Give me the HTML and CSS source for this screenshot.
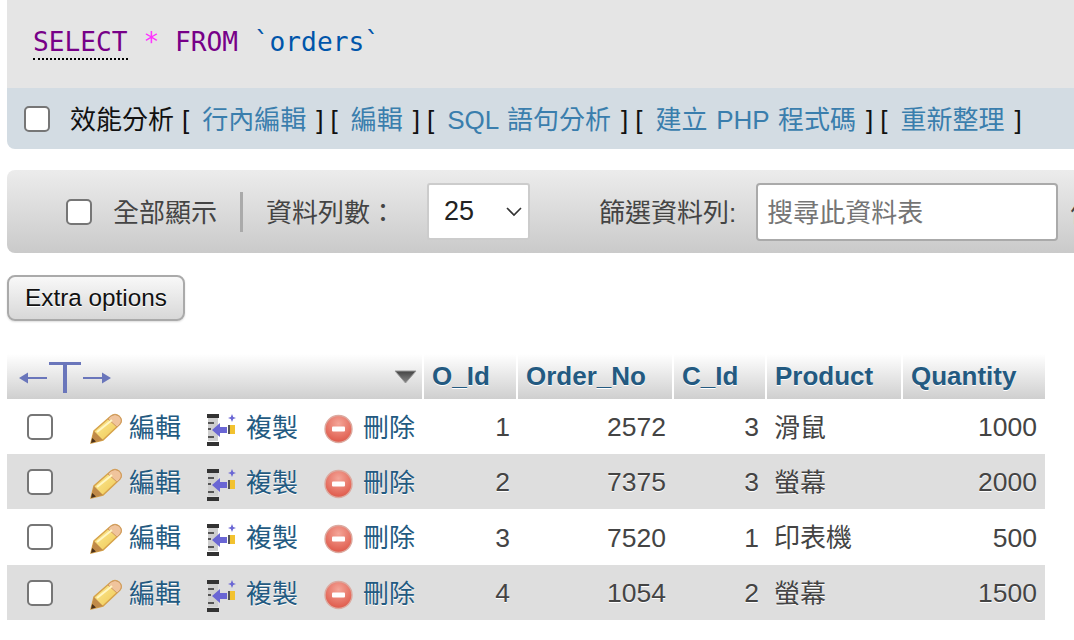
FILE: index.html
```html
<!DOCTYPE html>
<html lang="zh-Hant">
<head>
<meta charset="utf-8">
<title>orders</title>
<link rel="stylesheet" href="styles.css">
</head>
<body>
<svg class="defs" width="0" height="0" aria-hidden="true">
  <defs>
    <linearGradient id="pen" x1="0" y1="0" x2="1" y2="1"><stop offset="0" stop-color="#fdf0a0"/><stop offset="1" stop-color="#eec24a"/></linearGradient>
    <linearGradient id="sort" x1="0" y1="0" x2="0" y2="1"><stop offset="0" stop-color="#444"/><stop offset="1" stop-color="#888"/></linearGradient>
    <radialGradient id="red" cx=".5" cy=".3" r=".75"><stop offset="0" stop-color="#f4a598"/><stop offset="1" stop-color="#dd5344"/></radialGradient>
    <symbol id="i-edit" viewBox="0 0 33 33">
      <path d="M1 30 L4 18 L21 3 Q25 0 29 3 Q33 7 30 11 L13 27 Z" fill="url(#pen)" stroke="#d6a24a" stroke-width="1.4"/>
      <path d="M21 3 Q25 0 29 3 Q33 7 30 11 L27 14 L18 6 Z" fill="#f0c49c" stroke="#cf9a62" stroke-width="1"/>
      <path d="M7 19 L22 7" stroke="#fff6c4" stroke-width="2" fill="none"/>
      <path d="M1 30 L4 18 L13 27 Z" fill="#c08a48"/>
      <path d="M1 30 L2.2 25 L6 28.6 Z" fill="#4a3018"/>
    </symbol>
    <symbol id="i-copy" viewBox="0 0 33 33">
      <path d="M1 5 H11 V28 H1 Z" fill="#cfcfcf"/>
      <path d="M0 1 H12 V5 H0 Z M0 29 H12 V33 H0 Z" fill="#333"/>
      <path d="M1 9 H7 V11 H1 Z M1 15 H4 V17 H1 Z M1 23 H7 V25 H1 Z" fill="#555"/>
      <path d="M5 17 L13 10 V14 H20 V20 H13 V24 Z" fill="#6a66d4"/>
      <path d="M21 12 H28 V21 H21 Z" fill="#f2c230"/>
      <path d="M21 12 H23 V21 H21 Z" fill="#555"/>
      <path d="M25 1 L26.2 4 L29 5 L26.2 6 L25 9 L23.8 6 L21 5 L23.8 4 Z" fill="#6a66d4"/>
    </symbol>
    <symbol id="i-del" viewBox="0 0 33 33">
      <circle cx="14.5" cy="16" r="13.5" fill="url(#red)" stroke="#dcaaa0" stroke-width="1.4"/>
      <rect x="8" y="13.5" width="13" height="5" rx="1" fill="#fff"/>
    </symbol>
  </defs>
</svg>

<main class="page">
  <section class="sql">
    <div class="query"><code><dfn class="kw">SELECT</dfn> <span class="star">*</span> <span class="kw">FROM</span> <span class="name">`orders`</span></code></div>
    <div class="actions">
      <span class="box"></span>
      <span class="txt profile">效能分析</span>
      <span class="txt">[<a>行內編輯</a>]</span>
      <span class="txt">[<a>編輯</a>]</span>
      <span class="txt">[<a>SQL 語句分析</a>]</span>
      <span class="txt">[<a>建立 PHP 程式碼</a>]</span>
      <span class="txt">[<a>重新整理</a>]</span>
    </div>
  </section>

  <section class="nav">
    <span class="box"></span>
    <span class="txt all">全部顯示</span>
    <span class="rule"></span>
    <span class="txt rows-label">資料列數：</span>
    <span class="select">25<svg class="chev" viewBox="0 0 16 10" width="16" height="10"><path d="M1 1 L8 8 L15 1" fill="none" stroke="#333" stroke-width="1.6"/></svg></span>
    <span class="txt filter-label">篩選資料列:</span>
    <span class="search"><span class="txt">搜尋此資料表</span></span>
    <span class="txt more">依</span>
  </section>

  <button class="extra" type="button">Extra options</button>

  <table class="grid">
    <colgroup>
      <col class="c-a"><col class="c-b"><col class="c-c"><col class="c-d"><col class="c-e"><col class="c-f">
    </colgroup>
    <thead>
      <tr>
        <th class="resize">
          <div class="resize-in">
            <svg width="92" height="34" viewBox="0 0 92 34"><g fill="#6a76bb"><path d="M0 18 L9 12.5 V17 H28 V19 H9 V23.5 Z"/><path d="M30 2 H62 V5 H48 V33 H44 V5 H30 Z"/><path d="M92 18 L83 12.5 V17 H64 V19 H83 V23.5 Z"/></g></svg>
            <svg width="23" height="14" viewBox="0 0 23 14"><path d="M1 1 H22 L11.5 13 Z" fill="url(#sort)" stroke="#999" stroke-width="1"/></svg>
          </div>
        </th>
        <th>O_Id</th><th>Order_No</th><th>C_Id</th><th>Product</th><th>Quantity</th>
      </tr>
    </thead>
    <tbody>
      <tr>
        <td class="ops"><div class="ops-in"><span class="box"></span><a class="op op-e"><svg class="ico"><use href="#i-edit"/></svg><span class="txt">編輯</span></a><a class="op op-c"><svg class="ico"><use href="#i-copy"/></svg><span class="txt">複製</span></a><a class="op"><svg class="ico"><use href="#i-del"/></svg><span class="txt">刪除</span></a></div></td>
        <td class="num">1</td><td class="num">2572</td><td class="num">3</td><td class="cjk">滑鼠</td><td class="num">1000</td>
      </tr>
      <tr>
        <td class="ops"><div class="ops-in"><span class="box"></span><a class="op op-e"><svg class="ico"><use href="#i-edit"/></svg><span class="txt">編輯</span></a><a class="op op-c"><svg class="ico"><use href="#i-copy"/></svg><span class="txt">複製</span></a><a class="op"><svg class="ico"><use href="#i-del"/></svg><span class="txt">刪除</span></a></div></td>
        <td class="num">2</td><td class="num">7375</td><td class="num">3</td><td class="cjk">螢幕</td><td class="num">2000</td>
      </tr>
      <tr>
        <td class="ops"><div class="ops-in"><span class="box"></span><a class="op op-e"><svg class="ico"><use href="#i-edit"/></svg><span class="txt">編輯</span></a><a class="op op-c"><svg class="ico"><use href="#i-copy"/></svg><span class="txt">複製</span></a><a class="op"><svg class="ico"><use href="#i-del"/></svg><span class="txt">刪除</span></a></div></td>
        <td class="num">3</td><td class="num">7520</td><td class="num">1</td><td class="cjk">印表機</td><td class="num">500</td>
      </tr>
      <tr>
        <td class="ops"><div class="ops-in"><span class="box"></span><a class="op op-e"><svg class="ico"><use href="#i-edit"/></svg><span class="txt">編輯</span></a><a class="op op-c"><svg class="ico"><use href="#i-copy"/></svg><span class="txt">複製</span></a><a class="op"><svg class="ico"><use href="#i-del"/></svg><span class="txt">刪除</span></a></div></td>
        <td class="num">4</td><td class="num">1054</td><td class="num">2</td><td class="cjk">螢幕</td><td class="num">1500</td>
      </tr>
    </tbody>
  </table>
</main>
</body>
</html>
```

FILE: styles.css
```css
* { box-sizing: border-box; }
html, body { margin: 0; height: 100%; overflow: hidden; background: #fff; }
body { font-family: "Liberation Sans", "Noto Sans CJK TC", sans-serif; color: #444; font-size: 26px; }
.defs { position: absolute; }
.page { padding-left: 7px; width: 1074px; }
a { color: #235a81; }

.box { display: inline-block; flex: none; width: 26px; height: 26px; background: #fff; border: 2px solid #767676; border-radius: 5px; }
.txt { flex: none; margin-bottom: 3px; }

.sql { margin-bottom: 21px; }
.query { height: 88px; background: #e5e5e5; padding: 24px 0 0 26px; }
.query code { font-family: "DejaVu Sans Mono", monospace; font-size: 26.2px; line-height: 36px; white-space: pre; }
.kw { color: #770088; font-style: normal; }
dfn.kw { border-bottom: 2px dotted #000; padding-bottom: 1px; }
.star { color: #ff33ff; }
.name { color: #0055aa; }
.actions { height: 61px; background: #d3dce3; border-radius: 0 0 0 8px; padding-left: 17px; display: flex; align-items: center; gap: 7px; color: #111; white-space: nowrap; }
.actions a { color: #3a7ead; margin: 0 10px 0 13px; word-spacing: 1.5px; }
.actions .box { margin-right: 13px; }
.profile { margin-right: 1px; }

.nav { height: 83px; background: linear-gradient(#ececec, #cacaca); border-radius: 8px 0 0 8px; display: flex; align-items: center; padding-left: 59px; color: #444; white-space: nowrap; overflow: hidden; margin-bottom: 22px; }
.all { margin-left: 21px; }
.rule { flex: none; width: 3px; height: 40px; background: #aaa; margin: 0 23px 0 23px; }
.rows-label { width: 161px; }
.select { flex: none; width: 103px; height: 57px; background: #fff; border: 2px solid #ccc; border-radius: 3px; display: flex; align-items: center; justify-content: space-between; padding: 0 6px 0 15px; color: #222; font-size: 27px; }
.filter-label { margin-left: 69px; margin-right: 20px; }
.search { width: 302px; height: 58px; flex: none; background: #fff; border: 2px solid #aaa; border-radius: 4px; display: flex; align-items: center; padding-left: 9px; color: #757575; }
.more { margin-left: 12px; }

.extra { display: block; width: 178px; height: 46px; margin: 0 0 33px; padding: 0; font: 24.3px "Liberation Sans", sans-serif; color: #111; background: linear-gradient(#f8f8f8, #d8d8d8); border: 2px solid #aaa; border-radius: 8px; text-shadow: 0 1px 0 #fff; box-shadow: 0 1px 2px #ddd; }

.grid { table-layout: fixed; width: 1038px; border-collapse: separate; border-spacing: 0; }
.c-a { width: 417px; } .c-b { width: 94px; } .c-c { width: 156px; } .c-d { width: 93px; } .c-e { width: 136px; } .c-f { width: 142px; }
.grid th { height: 45px; padding: 0 0 0 8px; text-align: left; font-weight: bold; font-size: 26px; color: #235a81; background: linear-gradient(#fff, #cfcfcf); border-right: 2px solid #fff; text-shadow: 0 1px 0 #fff; white-space: nowrap; }
.grid th:last-child { border-right: 0; }
.grid th.resize { padding: 0 5px 0 12px; }
.resize-in { display: flex; align-items: center; justify-content: space-between; }
.grid td { height: 55px; padding: 0 8px; background: #fff; white-space: nowrap; }
.grid tbody tr:nth-child(3) td { height: 56px; }
.grid tbody tr:nth-child(even) td { background: #dedede; text-shadow: 0 1px 0 #fff; }
.grid td.num { text-align: right; font-size: 26.5px; padding-top: 2px; }
.grid td.cjk { padding: 0 8px 3px 7px; }
.grid td.ops { padding: 0 0 0 20px; }
.ops-in { display: flex; align-items: center; }
.op { display: flex; align-items: center; gap: 6px; }
.op-e { margin-left: 37px; width: 117px; }
.op-c { width: 117px; }
.ico { width: 33px; height: 33px; flex: none; margin-top: 5px; }
```
